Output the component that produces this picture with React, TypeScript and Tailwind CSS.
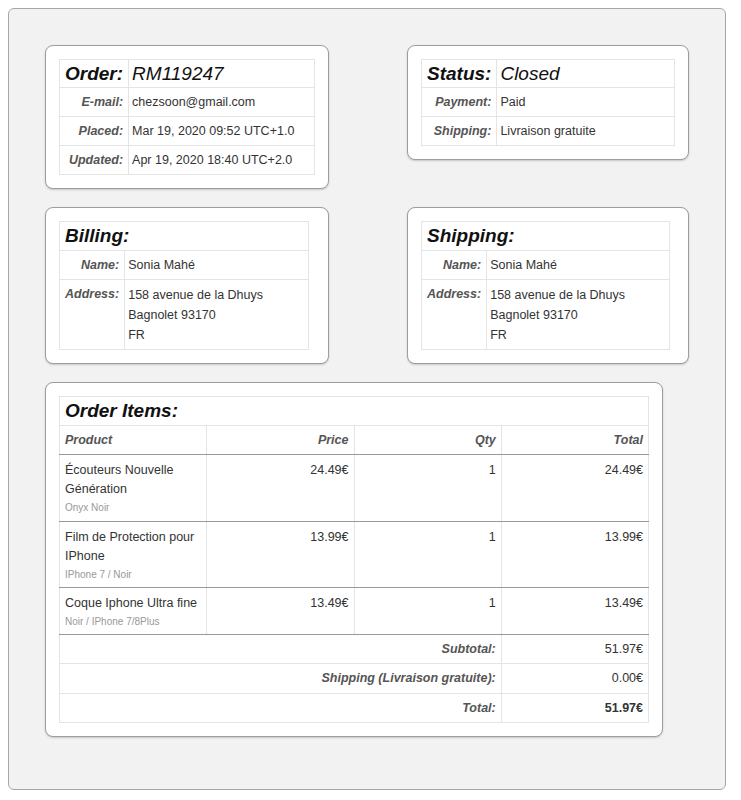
import type { ReactNode } from "react";

const FONT = "font-['Liberation_Sans',Arial,sans-serif]";
const CELL = "border border-[#e4e4e4] px-[5px] py-[4px] leading-5 align-top";
const LABEL = `${CELL} text-right font-bold italic text-[#555]`;
const VALUE = `${CELL} !pl-[3px] text-[#333]`;
const TITLE = "text-[19px] font-bold italic text-[#111]";

function Card({ width, children }: { width: string; children: ReactNode }) {
  return (
    <div
      className={`${width} shrink-0 rounded-[8px] border border-[#9d9d9d] bg-white p-[13px] shadow-[0_1px_2px_rgba(0,0,0,0.18)]`}
    >
      {children}
    </div>
  );
}

interface Row {
  label: string;
  value: ReactNode;
}

function InfoTable({
  title,
  titleValue,
  rows,
  width,
}: {
  title: string;
  titleValue?: string;
  rows: Row[];
  width: string;
}) {
  return (
    <table className={`${width} border-collapse text-[12.5px]`}>
      <tbody>
        <tr>
          {titleValue ? (
            <>
              <td className={`${CELL} w-[1%] whitespace-nowrap text-right !leading-[19px] ${TITLE}`}>
                {title}
              </td>
              <td className={`${CELL} !pl-[3px] text-[19px] !leading-[19px] italic text-[#111]`}>
                {titleValue}
              </td>
            </>
          ) : (
            <td colSpan={2} className={`${CELL} ${TITLE}`}>
              {title}
            </td>
          )}
        </tr>
        {rows.map((r) => (
          <tr key={r.label}>
            <td className={`${LABEL} w-[1%] whitespace-nowrap`}>{r.label}</td>
            <td className={VALUE}>{r.value}</td>
          </tr>
        ))}
      </tbody>
    </table>
  );
}

function Address() {
  return (
    <div className="pt-[1px]">
      <div>158 avenue de la Dhuys</div>
      <div>Bagnolet 93170</div>
      <div>FR</div>
    </div>
  );
}

const items = [
  {
    name: "Écouteurs Nouvelle Génération",
    variant: "Onyx Noir",
    price: "24.49€",
    qty: 1,
    total: "24.49€",
  },
  {
    name: "Film de Protection pour IPhone",
    variant: "IPhone 7 / Noir",
    price: "13.99€",
    qty: 1,
    total: "13.99€",
  },
  {
    name: "Coque Iphone Ultra fine",
    variant: "Noir / IPhone 7/8Plus",
    price: "13.49€",
    qty: 1,
    total: "13.49€",
  },
];

const totals = [
  { label: "Subtotal:", value: "51.97€", bold: false, tall: false },
  { label: "Shipping (Livraison gratuite):", value: "0.00€", bold: false, tall: true },
  { label: "Total:", value: "51.97€", bold: true, tall: false },
];

function ItemsTable() {
  const ITEM =
    "border border-[#e4e4e4] border-b-[#999] px-[5px] pt-[6px] align-top leading-[19px] text-[#333]";
  const HEAD = `${CELL} border-b-[#999] font-bold italic text-[#555]`;
  return (
    <table className="w-full table-fixed border-collapse text-[12.5px]">
      <tbody>
        <tr>
          <td colSpan={4} className={`${CELL} ${TITLE}`}>
            Order Items:
          </td>
        </tr>
        <tr>
          <td className={HEAD}>Product</td>
          <td className={`${HEAD} text-right`}>Price</td>
          <td className={`${HEAD} text-right`}>Qty</td>
          <td className={`${HEAD} text-right`}>Total</td>
        </tr>
        {items.map((it, i) => {
          const cls = `${ITEM} ${i === 0 ? "pb-[4px]" : "pb-[3px]"}`;
          return (
            <tr key={it.name}>
              <td className={cls}>
                <div>{it.name}</div>
                <div className="text-[10px] leading-[18px] text-[#999]">{it.variant}</div>
              </td>
              <td className={`${cls} text-right`}>{it.price}</td>
              <td className={`${cls} text-right`}>{it.qty}</td>
              <td className={`${cls} text-right`}>{it.total}</td>
            </tr>
          );
        })}
        {totals.map((t) => (
          <tr key={t.label}>
            <td colSpan={3} className={`${LABEL} ${t.tall ? "!pb-[5px]" : ""}`}>
              {t.label}
            </td>
            <td className={`${CELL} text-right text-[#333] ${t.bold ? "font-bold" : ""}`}>
              {t.value}
            </td>
          </tr>
        ))}
      </tbody>
    </table>
  );
}

export default function App() {
  return (
    <div className={`${FONT} bg-white p-[8px]`}>
      <div className="h-[782px] w-[718px] rounded-[6px] border border-[#a6a6a6] bg-[#f2f2f2] pl-[36px] pt-[36px]">
        <div className="flex flex-col gap-[18px]">
          <div className="flex items-start gap-[78px]">
            <Card width="w-[284px]">
              <InfoTable
                width="w-full"
                title="Order:"
                titleValue="RM119247"
                rows={[
                  { label: "E-mail:", value: "chezsoon@gmail.com" },
                  { label: "Placed:", value: "Mar 19, 2020 09:52 UTC+1.0" },
                  { label: "Updated:", value: "Apr 19, 2020 18:40 UTC+2.0" },
                ]}
              />
            </Card>
            <Card width="w-[282px]">
              <InfoTable
                width="w-full"
                title="Status:"
                titleValue="Closed"
                rows={[
                  { label: "Payment:", value: "Paid" },
                  { label: "Shipping:", value: "Livraison gratuite" },
                ]}
              />
            </Card>
          </div>
          <div className="flex items-start gap-[78px]">
            <Card width="w-[284px]">
              <InfoTable
                width="w-[250px]"
                title="Billing:"
                rows={[
                  { label: "Name:", value: "Sonia Mahé" },
                  { label: "Address:", value: <Address /> },
                ]}
              />
            </Card>
            <Card width="w-[282px]">
              <InfoTable
                width="w-[249px]"
                title="Shipping:"
                rows={[
                  { label: "Name:", value: "Sonia Mahé" },
                  { label: "Address:", value: <Address /> },
                ]}
              />
            </Card>
          </div>
          <Card width="w-[618px]">
            <ItemsTable />
          </Card>
        </div>
      </div>
    </div>
  );
}
